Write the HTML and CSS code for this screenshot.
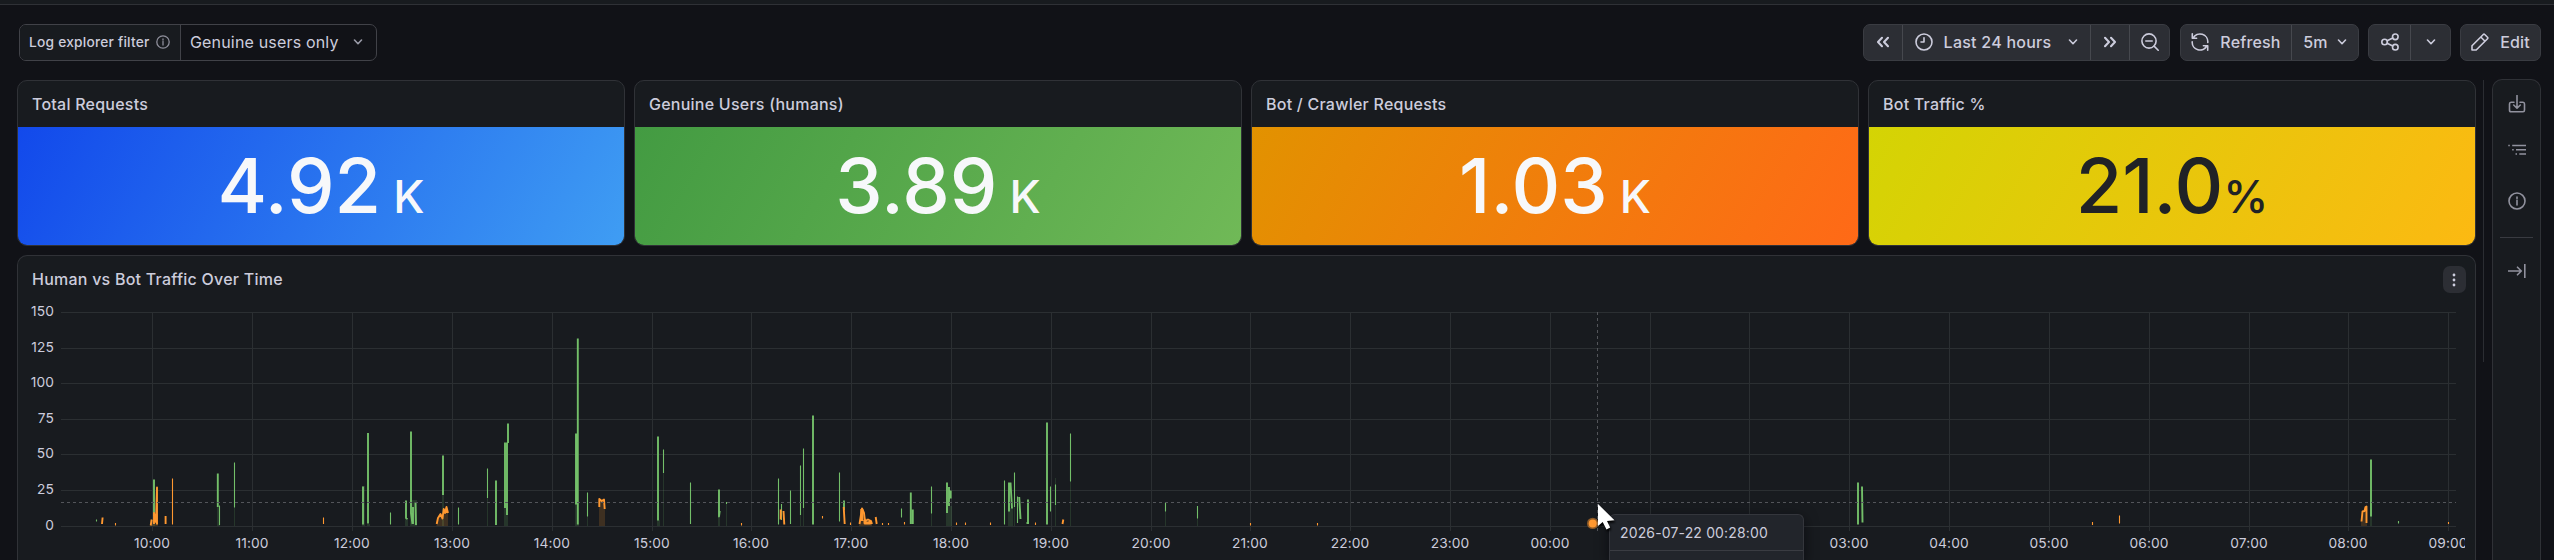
FILE: index.html
```
<!DOCTYPE html>
<html lang="en">
<head>
    <meta charset="UTF-8">
    <meta name="viewport" content="width=device-width, initial-scale=1.0">
    <title>Traffic dashboard</title>
    <link rel="stylesheet" href="styles.css">
</head>
<body>
    <div class="topbar"></div>

    <!-- Filter and time controls -->
    <div class="toolbar">
        <div class="filter">
            <div class="filter-label">
                <span>Log explorer filter</span>
                <svg class="icon-info" width="14" height="14" viewBox="0 0 14 14"><circle cx="7" cy="7" r="6.2"/><path d="M7 6.4V10M7 3.9V5.1"/></svg>
            </div>
            <div class="filter-value">
                <span>Genuine users only</span>
                <svg width="10" height="6" viewBox="0 0 10 6"><path d="M1.5 1L5 4.7L8.5 1"/></svg>
            </div>
        </div>
        <div class="controls">
            <div class="btn-group">
                <button class="btn w-back"><svg width="14" height="12" viewBox="0 0 14 12"><path class="bold" d="M6 1.8L2 6L6 10.2M12 1.8L8 6L12 10.2"/></svg></button>
                <button class="btn w-range">
                    <svg width="18" height="18" viewBox="0 0 18 18"><circle cx="9" cy="9" r="8"/><path d="M9 4.8V9H6"/></svg>
                    <span class="range-text">Last 24 hours</span>
                    <svg width="10" height="6" viewBox="0 0 10 6"><path d="M1.5 1L5 4.7L8.5 1"/></svg>
                </button>
                <button class="btn w-forward"><svg width="14" height="12" viewBox="0 0 14 12"><path class="bold" d="M2 1.8L6 6L2 10.2M8 1.8L12 6L8 10.2"/></svg></button>
                <button class="btn w-zoom"><svg width="18" height="18" viewBox="0 0 18 18"><circle cx="8" cy="8" r="7.1"/><path d="M13.1 13.1L17.2 17.2M4.8 8H11.2"/></svg></button>
            </div>
            <div class="btn-group refresh">
                <button class="btn w-refresh">
                    <svg width="18" height="18" viewBox="0 0 18 18"><path d="M1.3 0.8V5.2H5.6M2.2 5A7.8 7.8 0 0 1 16.8 9.4M16.7 17.2V12.8H12.4M15.8 13A7.8 7.8 0 0 1 1.2 8.8"/></svg>
                    <span class="refresh-text">Refresh</span>
                </button>
                <button class="btn w-interval">
                    <span>5m</span>
                    <svg width="10" height="6" viewBox="0 0 10 6"><path d="M1.5 1L5 4.7L8.5 1"/></svg>
                </button>
            </div>
            <div class="btn-group share">
                <button class="btn w-share"><svg width="18" height="18" viewBox="0 0 18 18"><circle cx="3.6" cy="9" r="2.8"/><circle cx="14.3" cy="3.8" r="2.8"/><circle cx="14.3" cy="14.2" r="2.8"/><path d="M6.1 7.8L11.8 5M6.1 10.2L11.8 13"/></svg></button>
                <button class="btn w-share-menu"><svg width="10" height="6" viewBox="0 0 10 6"><path d="M1.5 1L5 4.7L8.5 1"/></svg></button>
            </div>
            <div class="btn-group edit">
                <button class="btn w-edit">
                    <svg width="18" height="18" viewBox="0 0 18 18"><path d="M1 17V12.8L12.3 1.5Q13 .8 13.7 1.5L16.5 4.3Q17.2 5 16.5 5.7L5.2 17ZM9.8 4L14 8.2"/></svg>
                    <span class="edit-text">Edit</span>
                </button>
            </div>
        </div>
    </div>

    <div class="main">
        <div class="dashboard">
            <div class="stats">
                <div class="panel">
                    <h2 class="panel-title">Total Requests</h2>
                    <div class="stat stat-blue"><span class="value">4.92</span><span class="unit"> K</span></div>
                </div>
                <div class="panel">
                    <h2 class="panel-title">Genuine Users (humans)</h2>
                    <div class="stat stat-green"><span class="value">3.89</span><span class="unit"> K</span></div>
                </div>
                <div class="panel">
                    <h2 class="panel-title">Bot / Crawler Requests</h2>
                    <div class="stat stat-orange"><span class="value">1.03</span><span class="unit"> K</span></div>
                </div>
                <div class="panel">
                    <h2 class="panel-title">Bot Traffic %</h2>
                    <div class="stat stat-yellow"><span class="value">21.0</span><span class="unit">%</span></div>
                </div>
            </div>

            <div class="panel chart-panel">
                <div class="chart-header">
                    <h2 class="panel-title">Human vs Bot Traffic Over Time</h2>
                    <button class="menu-btn"><svg width="4" height="14" viewBox="0 0 4 14"><circle cx="2" cy="2" r="1.4"/><circle cx="2" cy="7" r="1.4"/><circle cx="2" cy="12" r="1.4"/></svg></button>
                </div>
                <svg class="chart" width="2457" height="260" viewBox="18 300 2457 260">
                    <defs>
                        <clipPath id="axis-clip"><rect x="18" y="300" width="2447" height="260"/></clipPath>
                    </defs>
                    <path class="grid" d="M61 312.5H2456M61 348.5H2456M61 383.5H2456M61 419.5H2456M61 454.5H2456M61 490.5H2456M61 526.5H2456"/>
                    <path class="grid" d="M152.5 312V531M252.5 312V531M352.5 312V531M452.5 312V531M552.5 312V531M652.5 312V531M751.5 312V531M851.5 312V531M951.5 312V531M1051.5 312V531M1151.5 312V531M1250.5 312V531M1350.5 312V531M1450.5 312V531M1550.5 312V531M1650.5 312V531M1749.5 312V531M1849.5 312V531M1949.5 312V531M2049.5 312V531M2149.5 312V531M2249.5 312V531M2348.5 312V531M2448.5 312V531"/>

                    <g class="y-axis">
                        <text x="54" y="315.7">150</text>
                        <text x="54" y="351.7">125</text>
                        <text x="54" y="386.7">100</text>
                        <text x="54" y="422.7">75</text>
                        <text x="54" y="457.7">50</text>
                        <text x="54" y="493.7">25</text>
                        <text x="54" y="529.5">0</text>
                    </g>
                    <g class="x-axis" clip-path="url(#axis-clip)">
                        <text x="152" y="547.7">10:00</text>
                        <text x="252" y="547.7">11:00</text>
                        <text x="352" y="547.7">12:00</text>
                        <text x="452" y="547.7">13:00</text>
                        <text x="552" y="547.7">14:00</text>
                        <text x="652" y="547.7">15:00</text>
                        <text x="751" y="547.7">16:00</text>
                        <text x="851" y="547.7">17:00</text>
                        <text x="951" y="547.7">18:00</text>
                        <text x="1051" y="547.7">19:00</text>
                        <text x="1151" y="547.7">20:00</text>
                        <text x="1250" y="547.7">21:00</text>
                        <text x="1350" y="547.7">22:00</text>
                        <text x="1450" y="547.7">23:00</text>
                        <text x="1550" y="547.7">00:00</text>
                        <text x="1849" y="547.7">03:00</text>
                        <text x="1949" y="547.7">04:00</text>
                        <text x="2049" y="547.7">05:00</text>
                        <text x="2149" y="547.7">06:00</text>
                        <text x="2249" y="547.7">07:00</text>
                        <text x="2348" y="547.7">08:00</text>
                        <text x="2448" y="547.7">09:00</text>
                    </g>

                    <!-- area fills under the lines -->
                    <path class="human-fill" d="M153 516H155V526H153ZM217 507H220V526H217ZM234 507H235V526H234ZM362 486H365V526H362ZM367 524H370V526H367ZM405 519H408V526H405ZM410 500H417V526H410ZM442 495H444V526H442ZM487 490H488V526H487ZM504 508H508V526H504ZM575 504H579V526H575ZM587 516H588V526H587ZM657 520H660V526H657ZM663 470H664V526H663ZM718 516H720V526H718ZM726 504H727V526H726ZM800 515H801V526H800ZM803 508H804V526H803ZM931 513H932V526H931ZM946 506H952V526H946ZM1008 508H1013V526H1008ZM1014 500H1015V526H1014ZM1055 478H1056V526H1055ZM1070 481H1071V526H1070ZM1165 511H1166V526H1165ZM1197 518H1198V526H1197ZM2370 516H2372V526H2370Z"/>
                    <path class="bot-fill" d="M150.5 520H158V526H150.5ZM436.5 525L440 515L443 518L446 508H448V526H436.5ZM599 500H605V526H599ZM859 525L862 510L865 518L872 520V526H859ZM2361 521L2364 512L2367 507V526H2361Z"/>

                    <!-- human requests -->
                    <path class="human thin" d="M96.5 519.5V521.5M219.5 505.5V525M234.5 462.5V507.5M390.5 512.5V524.5M458.5 507.5V524.5M487.5 468.5V498M587.5 492.5V516.5M663.5 449.5V473M690.5 482.5V524M726.5 502V504M778.5 478.5V524.5M781.5 504V520M790.5 490.5V524M800.5 465.5V515M803.5 448.5V508M839.5 472.5V521.5M901.5 508.5V517.5M931.5 486.5V513.5M1004.5 480.5V524.5M1014.5 472.5V507M1017.5 496.5V523M1050.5 486.5V511.5M1055.5 484.5V505M1070.5 433.5V481.5M1165.5 503V511.5M1197.5 506V518.5M2398.5 521V523.5"/>
                    <path class="human" d="M154 479.5V516M217.8 473.5V507M363 486.5V524.5M368 433V523.5M406 500.5V518L407.5 519M411 431.5V513L412.5 524M413 507V524M415.5 502.5L416 525M443 455.5V495M496 480.5V525M505 442.5V508M507 442.5V515M508 423.5V443M576 433.5V504.5M577.8 338.5V524.5M658 436.5V520.5M719 489.5V516.5L719.7 511M813 415.5V524.5M844 500.5V510M910.8 492.5V524M912.8 509.5V524M947 482.5V513M949 487V506M950.7 490.5V498.5M1009 482.5V511.5M1010.5 482.5L1012 508.5M1019.2 497L1020.5 519M1026.5 523H1029M1028 499.5V523.5M1047 422.5V524.5M1858 482.5V524.5M1862 486.5L1862.5 522.5M2371 459.5V516.5"/>

                    <!-- bot requests -->
                    <path class="bot thin" d="M115.5 523V525.5M172.5 478.5V524.5M323.5 517.5V524M741.5 523V525.5M822.5 516V518.5M850.5 522.5V525M882.5 523V525M888.5 523V525M904.5 522V524.5M956.5 522.5V525M965.5 522.5V525M990.5 522.5V525M1035.5 522.5V525M1250.5 523V525.5M1317.5 523V525.5M2092.5 522V525M2119.5 515.5V523.5M2448.5 522V524"/>
                    <path class="bot" d="M102 524L102.6 517.5M150.7 525.5L151.7 519.5M154 524V513L156 522L157 487.5V524.5M165.6 516V524M436.7 524L438 518L440.5 514L442.5 518.5L443.7 509L445 513L446.5 507L448 513M599.3 507V499L601.7 501L604 499.5L604.7 509M780.7 509.5V519.5M783.5 511L784.3 524.5M843.7 507L844.7 524M859.5 524L862 508.5L864 513L865 521L868 519.5L871 521L872 524M875.7 517L876.7 524M1062.5 524L1063.3 519.5M2361.5 521.5L2362.5 511.5L2364.5 511L2365.5 507L2366.5 506.5V523"/>
                    <path class="bot wide" d="M861.8 509V521M865 520V523H870V521M446 511V513"/>

                    <path class="crosshair" d="M61 502.5H2456M1597.5 312V531"/>
                    <circle class="marker-halo" cx="1592.7" cy="523.4" r="5.7"/>
                    <circle class="marker" cx="1592.7" cy="523.4" r="4"/>
                </svg>
            </div>
        </div>

        <div class="scroll-edge"></div>

        <div class="sidebar">
            <svg class="side-export" width="18" height="18" viewBox="0 0 18 18"><path d="M6 7.3H3Q1.5 7.3 1.5 9V15Q1.5 16.8 3 16.8H15Q16.5 16.8 16.5 15V9Q16.5 7.3 15 7.3H12M9 .5V13M5.7 10L9 13.2L12.3 10"/></svg>
            <svg class="side-outline" width="18" height="12" viewBox="0 0 18 12"><path d="M.3 1.5H1.8M4.2 1.5H18M4.2 5.8H5.7M8 5.8H18M7.5 10H9M11.3 10H18"/></svg>
            <svg class="side-info" width="18" height="18" viewBox="0 0 18 18"><circle cx="9" cy="9" r="8"/><path d="M9 8.2V13M9 5V6.6"/></svg>
            <div class="side-divider"></div>
            <svg class="side-collapse" width="18" height="14" viewBox="0 0 18 14"><path d="M.5 7H13M9.5 3.2L13.3 7L9.5 10.8M16.8 0V14"/></svg>
        </div>
    </div>

    <!-- Hover tooltip and pointer -->
    <div class="tooltip">
        <div class="tooltip-time">2026-07-22 00:28:00</div>
    </div>
    <svg class="pointer" width="22" height="32" viewBox="-2 -2 22 32"><path d="M0 0V22L4.7 18L8.5 25.5L12.2 23.6L9 17L16.5 16.2Z"/></svg>
</body>
</html>
```
FILE: styles.css
```
* {
    box-sizing: border-box;
}
body {
    margin: 0;
    height: 560px;
    overflow: hidden;
    background-color: #111217;
    color: #ccccdc;
    font-family: Inter, sans-serif;
    font-size: 16px;
    letter-spacing: 0.17px;
}
svg {
    display: block;
    flex: none;
    fill: none;
    stroke: currentColor;
    stroke-width: 1.6;
    stroke-linecap: round;
    stroke-linejoin: round;
}
svg .bold { stroke-width: 2.1; }

.topbar {
    height: 5px;
    background-color: #181b1f;
    border-bottom: 1px solid #2f3136;
}

/* Toolbar */
.toolbar {
    display: flex;
    justify-content: space-between;
    height: 75px;
    padding: 19px 13px 0 19px;
}
.filter {
    display: flex;
    width: 358px;
    height: 37px;
    border: 1px solid #414248;
    border-radius: 7px;
    overflow: hidden;
}
.filter-label {
    display: flex;
    align-items: center;
    gap: 6px;
    width: 161px;
    padding: 0 0 1px 9px;
    background-color: #181b1f;
    border-right: 1px solid #414248;
    font-size: 13.75px;
    font-weight: 500;
    letter-spacing: 0.22px;
}
.filter-label svg {
    color: #8e8f9b;
    stroke-width: 1.3;
}
.filter-value {
    display: flex;
    align-items: center;
    justify-content: space-between;
    flex: 1;
    padding: 0 13px 1px 9px;
}
.filter-value svg { color: #9a9ba8; }
.controls {
    display: flex;
}
.btn-group {
    display: flex;
    height: 37px;
    background-color: #2c2e34;
    border: 1px solid #3a3c42;
    border-radius: 7px;
    overflow: hidden;
}
.refresh { margin-left: 10px; }
.share { margin-left: 9px; }
.edit { margin-left: 9px; }
.btn {
    display: flex;
    align-items: center;
    justify-content: center;
    padding: 0 0 1px;
    border: none;
    border-right: 1px solid #46484e;
    background: transparent;
    color: inherit;
    font: inherit;
    font-weight: 500;
    letter-spacing: inherit;
}
.btn:last-child { border-right: none; }
.w-back { width: 39px; }
.w-range { width: 188px; letter-spacing: 0.25px; }
.w-forward { width: 39px; }
.w-zoom { width: 39px; }
.w-refresh { width: 111px; }
.w-interval { width: 66px; gap: 9px; }
.w-share { width: 42px; }
.w-share-menu { width: 39px; }
.w-edit { width: 79px; }
.range-text { margin: 0 17px 0 11px; }
.refresh-text, .edit-text { margin-left: 11px; }

/* Panels */
.main {
    display: flex;
    align-items: flex-start;
    padding-left: 17px;
}
.dashboard {
    width: 2459px;
}
.stats {
    display: grid;
    grid-template-columns: repeat(4, 1fr);
    gap: 9px;
    margin-bottom: 9px;
}
.panel {
    background-color: #181b1f;
    border: 1px solid #303237;
    border-radius: 10px;
    overflow: hidden;
}
.panel-title {
    margin: 0;
    padding: 0 14px;
    height: 46px;
    line-height: 47px;
    font-size: 16px;
    font-weight: 500;
    letter-spacing: 0.24px;
}
.stat {
    display: flex;
    align-items: baseline;
    justify-content: center;
    height: 118px;
    line-height: 118px;
    color: #f7f8fa;
    font-weight: 500;
    white-space: pre;
    letter-spacing: 0;
}
.value { font-size: 75.6px; }
.unit { font-size: 45.4px; }
.stat-blue { background: linear-gradient(120deg, #1249eb, #3f9df3); }
.stat-green { background: linear-gradient(120deg, #439b42, #70b957); }
.stat-orange { background: linear-gradient(120deg, #e29200, #ff6917); }
.stat-yellow { background: linear-gradient(120deg, #d4d404, #fcb912); color: #202226; }

/* Chart */
.chart-panel {
    height: 305px;
    border-bottom: none;
    border-radius: 10px 10px 0 0;
}
.chart-header {
    display: flex;
    justify-content: space-between;
    align-items: flex-start;
    height: 44px;
    padding-right: 9px;
}
.menu-btn {
    display: flex;
    align-items: center;
    justify-content: center;
    width: 23px;
    height: 27px;
    margin-top: 10px;
    padding: 0 1px 0 0;
    border: none;
    border-radius: 7px;
    background-color: #2c2e34;
    color: #ccccdc;
}
.menu-btn svg {
    fill: currentColor;
    stroke: none;
}
.chart * { stroke-linecap: butt; }
.chart text {
    fill: #ccccdc;
    stroke: none;
    font-size: 13.75px;
    letter-spacing: 0.1px;
}
.y-axis { text-anchor: end; }
.x-axis { text-anchor: middle; }
.grid {
    stroke: #2b2f32;
    stroke-width: 1;
}
.crosshair {
    stroke: #53555a;
    stroke-width: 1;
    stroke-dasharray: 3 3;
}
.human { stroke: #73bf69; stroke-width: 1.9; }
.bot { stroke: #ff9830; stroke-width: 1.9; }
.human.thin, .bot.thin { stroke-width: 1.1; }
.bot.wide { stroke-width: 3; }
.human-fill { fill: #73bf69; fill-opacity: 0.17; stroke: none; }
.bot-fill { fill: #ff9830; fill-opacity: 0.17; stroke: none; }
.marker { fill: #ff9830; stroke: none; }
.marker-halo { fill: #ff9830; fill-opacity: 0.5; stroke: none; }

/* Right rail */
.scroll-edge {
    width: 1px;
    height: 282px;
    margin-left: 7px;
    background-color: #2b2d32;
}
.sidebar {
    display: flex;
    flex-direction: column;
    align-items: center;
    width: 49px;
    height: 481px;
    margin: -1px 0 0 8px;
    padding-top: 15px;
    background-color: #181b1f;
    border: 1px solid #2f3136;
    border-bottom: none;
    border-radius: 10px 10px 0 0;
    color: #91929e;
}
.side-outline {
    margin-top: 31px;
    stroke-linecap: butt;
}
.side-info { margin-top: 36px; }
.side-divider {
    width: 33px;
    height: 1px;
    margin-top: 27px;
    background-color: #393b41;
}
.side-collapse { margin-top: 26px; }

/* Tooltip lies over the chart */
.tooltip {
    position: absolute;
    left: 1609px;
    top: 514px;
    width: 195px;
    height: 46px;
    background-color: #22252b;
    border: 1px solid #34363c;
    border-bottom: none;
    border-radius: 6px 6px 0 0;
    box-shadow: 0 4px 14px rgba(1, 4, 9, 0.6);
}
.tooltip-time {
    height: 36px;
    padding-left: 10px;
    line-height: 36px;
    border-bottom: 1px solid #3a3c42;
    font-size: 14px;
    letter-spacing: 0.15px;
}
.pointer {
    position: absolute;
    left: 1596px;
    top: 502px;
    fill: #ffffff;
    stroke: none;
    filter: drop-shadow(1px 2px 1px #000000);
}
```
